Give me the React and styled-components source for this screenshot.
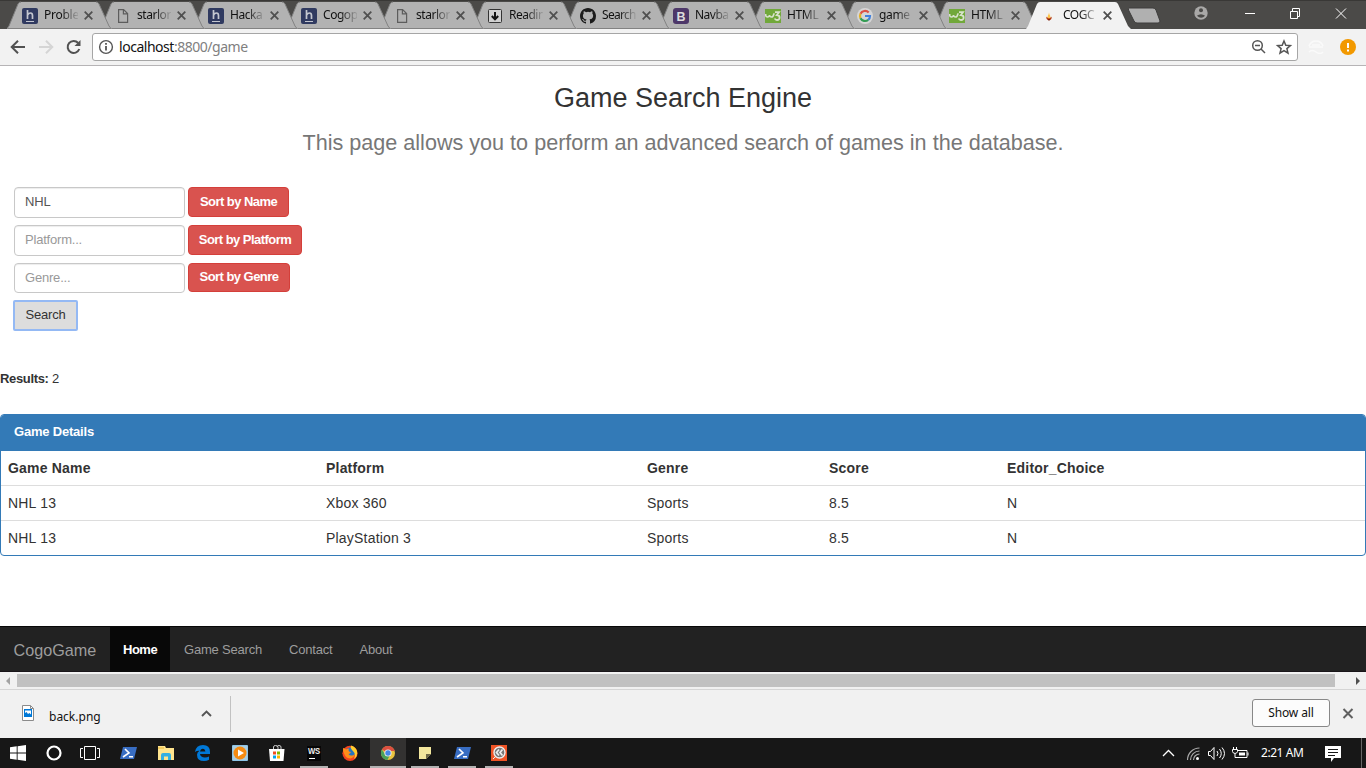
import React from "react";
import styled, { createGlobalStyle } from "styled-components";

const UI = '"Noto Sans", "Open Sans", sans-serif';

const Global = createGlobalStyle`
  * { box-sizing: border-box; }
  body { margin: 0; background: #fff; overflow: hidden; }
  svg { display: block; flex: none; }
`;

const Screen = styled.div`
  width: 1366px;
  height: 768px;
  display: flex;
  flex-direction: column;
  overflow: hidden;
  font-family: "Liberation Sans", Arial, sans-serif;
  font-size: 13px;
  letter-spacing: -0.2px;
  color: #333;
`;

/* Browser frame */
const TabStrip = styled.div`
  height: 29px;
  background: #4b4a48;
  border-top: 1px solid #393836;
  display: flex;
  padding-left: 7px;
  position: relative;
  flex: none;
`;
const TabBox = styled.div`
  width: 105px;
  height: 28px;
  flex: none;
  margin-right: ${(p) => p.$overlap}px;
  position: relative;
  z-index: ${(p) => p.$z};
  display: flex;
  align-items: center;
  padding-left: 15px;
`;
const TabShape = styled.svg`
  position: absolute;
  inset: 0;
`;
const Favicon = styled.div`
  width: 16px;
  height: 16px;
  position: relative;
  margin-top: 1px;
`;
const TabTitle = styled.div`
  position: relative;
  width: 34px;
  margin-left: 6px;
  overflow: hidden;
  white-space: nowrap;
  font: 12px/18px ${UI};
  letter-spacing: ${(p) => p.$track || -0.45}px;
  color: #111;
  mask-image: linear-gradient(90deg, #000 50%, rgba(0, 0, 0, 0.1) 100%);
`;
const TabClose = styled.svg`
  position: relative;
  margin-left: 6px;
  margin-top: 1px;
`;
const NewTab = styled.svg`
  margin: 6px 0 0 9px;
`;
const WindowButtons = styled.div`
  margin-left: auto;
  display: flex;
  align-items: center;
  height: 24px;
  padding-right: 19px;
`;
const Toolbar = styled.div`
  height: 37px;
  flex: none;
  background: #f2f2f2;
  border-bottom: 1px solid #b6b4b6;
  display: flex;
  align-items: center;
  padding: 0 9px 0 9px;
`;
const NavIcon = styled.svg`
  margin-right: 10px;
`;
const AddressBar = styled.div`
  width: 1206px;
  height: 28px;
  border: 1px solid #a6a6a6;
  border-radius: 3px;
  background: #fff;
  display: flex;
  align-items: center;
  padding: 0 3px 0 5px;
`;
const Url = styled.div`
  font: 14px/20px ${UI};
  letter-spacing: -0.47px;
  color: #808080;
  margin: 0 auto 0 5px;
  b { font-weight: 400; color: #111; }
`;
const ExtensionIcon = styled.svg`
  margin-left: 10px;
`;
const UpdateIcon = styled.svg`
  margin-left: 16px;
`;

/* Page */
const Page = styled.main`
  height: 560px;
  flex: none;
  background: #fff;
`;
const Heading = styled.h3`
  margin: 0;
  padding-top: 15px;
  text-align: center;
  font-size: 27px;
  line-height: 34px;
  font-weight: 400;
  letter-spacing: 0;
`;
const Lead = styled.p`
  margin: 0;
  padding-top: 13px;
  text-align: center;
  font-size: 21.6px;
  line-height: 30px;
  letter-spacing: 0;
  color: #777;
`;
const Form = styled.form`
  padding: 29px 0 0 14px;
  height: 144px;
  box-sizing: content-box;
`;
const FormRow = styled.div`
  display: flex;
  gap: 3px;
  height: 38px;
  align-items: flex-start;
`;
const Field = styled.input`
  width: 171px;
  height: ${(p) => p.$h || 31}px;
  border: 1px solid #c8c8c8;
  border-radius: 4px;
  box-shadow: inset 0 1px 1px rgba(0, 0, 0, 0.075);
  padding: 0 10px 2px;
  font: 13px "Liberation Sans", Arial, sans-serif;
  letter-spacing: -0.2px;
  color: #555;
  outline: none;
  &::placeholder { color: #999; opacity: 1; }
`;
const SortButton = styled.button`
  width: ${(p) => p.$w}px;
  height: ${(p) => p.$h || 30}px;
  border: 1px solid #d43f3a;
  border-radius: 4px;
  background: #d9534f;
  color: #fff;
  padding: 0 0 2px;
  font: bold 13px "Liberation Sans", Arial, sans-serif;
  letter-spacing: -0.55px;
`;
const SearchButton = styled.button`
  margin: -1px 0 0 -1px;
  width: 65px;
  height: 31px;
  border: 2px solid #94b9f4;
  border-radius: 2px;
  background: #ddd;
  color: #333;
  padding: 0 0 2px;
  font: 13px "Liberation Sans", Arial, sans-serif;
  letter-spacing: -0.2px;
`;
const Results = styled.p`
  margin: 0;
  padding-top: 39px;
  line-height: 18px;
  b { letter-spacing: -0.35px; }
`;
const Panel = styled.section`
  margin-top: 26px;
  height: 142px;
  border: 1px solid #337ab7;
  border-radius: 4px;
  overflow: hidden;
`;
const PanelHeading = styled.div`
  height: 36px;
  background: #337ab7;
  color: #fff;
  font-weight: 700;
  line-height: 34px;
  padding-left: 13px;
`;
const TableRow = styled.div`
  display: grid;
  grid-template-columns: 318px 321px 182px 178px 1fr;
  height: 35px;
  padding-left: 7px;
  line-height: 34px;
  font-size: 14px;
  letter-spacing: 0.2px;
  font-weight: ${(p) => (p.$head ? 700 : 400)};
  border-bottom: 1px solid #ddd;
  &:last-child { border-bottom: 0; }
`;
const Navbar = styled.nav`
  height: 46px;
  flex: none;
  background: #222;
  border-top: 1px solid #080808;
  border-bottom: 1px solid #191519;
  display: flex;
  color: #9d9d9d;
  line-height: 45px;
`;
const Brand = styled.div`
  width: 110px;
  padding: 1px 0 0 13.5px;
  font-size: 16.2px;
  letter-spacing: 0;
`;
const NavItem = styled.div`
  padding: 0 13px 0 14px;
  height: 45px;
  ${(p) => p.$active && "background:#080808;color:#fff;font-weight:700;width:60px;padding:0 0 0 13px;letter-spacing:-0.5px;"}
`;
const ScrollBar = styled.div`
  height: 17px;
  flex: none;
  background: #f1f1f1;
  display: flex;
  align-items: center;
`;
const ScrollThumb = styled.div`
  width: 1318px;
  height: 13px;
  background: #c1c1c1;
`;
const ScrollArrow = styled.svg`
  margin: 0 ${(p) => p.$r}px 0 ${(p) => p.$l}px;
`;

/* Downloads */
const Downloads = styled.div`
  height: 49px;
  flex: none;
  background: #f1f1f1;
  border-top: 1px solid #d5d5d5;
  display: flex;
  align-items: center;
  padding: 0 12px 0 22px;
  font: 12px ${UI};
  color: #111;
`;
const DownloadItem = styled.div`
  width: 209px;
  height: 36px;
  border-right: 1px solid #c2c2c2;
  display: flex;
  align-items: center;
  padding-right: 18px;
  margin-top: -1px;
`;
const FileIcon = styled.svg`
  margin-top: -2px;
`;
const FileName = styled.span`
  margin: 5px auto 0 15px;
  letter-spacing: 0;
`;
const ShowAll = styled.button`
  margin: -2px 12px 0 auto;
  width: 78px;
  height: 28px;
  border: 1px solid #888;
  border-radius: 3px;
  background: #fcfcfc;
  color: #111;
  padding: 0 0 1px;
  font: 12px ${UI};
  letter-spacing: -0.1px;
`;

/* Taskbar */
const Taskbar = styled.div`
  height: 30px;
  flex: none;
  background: #171717;
  display: flex;
  color: #fff;
`;
const Task = styled.div`
  width: ${(p) => p.$w || 37}px;
  height: 30px;
  display: flex;
  align-items: center;
  justify-content: center;
  background: ${(p) => (p.$active ? "#333231" : "none")};
  box-shadow: ${(p) => (p.$open ? "inset 0 -2px #b2b2b2" : "none")};
  margin-left: ${(p) => p.$ml || 0}px;
`;
const Tray = styled.div`
  margin-left: auto;
  display: flex;
  align-items: center;
  font: 12px ${UI};
  letter-spacing: -0.45px;
`;
const Clock = styled.span`
  width: 46px;
  margin: 0 18px 1px 12px;
  white-space: nowrap;
`;
const DesktopEdge = styled.div`
  width: 1px;
  height: 30px;
  background: #666;
  margin: 0 4px 0 20px;
`;

const icons = {
  h: (
    <svg width="16" height="16">
      <rect width="16" height="16" rx="2" fill="#303a60" />
      <path d="M5.5 2v9M5.5 7q1-2 3-2 2 0 2 2.5V11" fill="none" stroke="#c3c6cf" strokeWidth="1.7" />
      <path d="M4 13.5h8" stroke="#c3c6cf" />
    </svg>
  ),
  doc: (
    <svg width="16" height="16" fill="none" stroke="#5d5d5d" strokeWidth="1.2">
      <path d="M3.6 1.6h5l4 4v8.8h-9zM8.4 1.8v4h4" />
    </svg>
  ),
  read: (
    <svg width="16" height="16">
      <rect x="1.5" y="1.5" width="13" height="13" rx="1" fill="#d0d0d0" stroke="#333" />
      <path d="M8 4v7M4.8 8 8 11.3 11.2 8" fill="none" stroke="#111" strokeWidth="2" />
    </svg>
  ),
  github: (
    <svg width="16" height="16" viewBox="0 0 16 16">
      <path
        fill="#1c1c1c"
        d="M8 0C3.58 0 0 3.58 0 8c0 3.54 2.29 6.53 5.47 7.59.4.07.55-.17.55-.38 0-.19-.01-.82-.01-1.49-2.01.37-2.53-.49-2.69-.94-.09-.23-.48-.94-.82-1.13-.28-.15-.68-.52-.01-.53.63-.01 1.08.58 1.23.82.72 1.21 1.87.87 2.33.66.07-.52.28-.87.51-1.07-1.78-.2-3.64-.89-3.64-3.95 0-.87.31-1.59.82-2.15-.08-.2-.36-1.02.08-2.12 0 0 .67-.21 2.2.82a7.4 7.4 0 0 1 4 0c1.53-1.04 2.2-.82 2.2-.82.44 1.1.16 1.92.08 2.12.51.56.82 1.27.82 2.15 0 3.07-1.87 3.75-3.65 3.95.29.25.54.73.54 1.48 0 1.07-.01 1.93-.01 2.2 0 .21.15.46.55.38A8.01 8.01 0 0 0 16 8c0-4.42-3.58-8-8-8z"
      />
    </svg>
  ),
  boot: (
    <svg width="16" height="16">
      <rect width="16" height="16" rx="3" fill="#4d3769" />
      <text x="8" y="12.5" textAnchor="middle" fontFamily="Liberation Sans" fontWeight="700" fontSize="12.5" fill="#ddd">B</text>
    </svg>
  ),
  w3: (
    <svg width="16" height="16">
      <rect y="1" width="16" height="14" fill="#71a83a" />
      <path d="M.7 6v1q0 2 1.8 2t2-2q.2 2 2 2 1.7 0 2.2-2.5l.6-1.2" fill="none" stroke="#d8e2cc" strokeWidth="1.6" />
      <path d="M10 4.2h4l-2.2 3q2.8 0 2.8 2.4t-2.6 2.4q-1.7 0-2.3-1.5" fill="none" stroke="#d8e2cc" strokeWidth="1.8" />
    </svg>
  ),
  google: (
    <svg width="16" height="16">
      <circle cx="8" cy="8" r="8" fill="#d6d6d6" />
      <g fill="none" strokeWidth="2.2">
        <path d="M11.7 4.5A5 5 0 0 0 3.5 5.8" stroke="#dd5144" />
        <path d="M3.5 5.8a5 5 0 0 0 0 4.4" stroke="#e4b126" />
        <path d="M3.5 10.2A5 5 0 0 0 11.2 11.8" stroke="#349c53" />
        <path d="M11.2 11.8Q13 10.4 13 8H8" stroke="#4280dc" />
      </g>
    </svg>
  ),
  flame: (
    <svg width="16" height="16">
      <path d="M5.2 8.5q.3 1 1.6 1h2.4q1.3 0 1.6-1 0 3.8-2.8 3.8T5.2 8.5" fill="#b63d16" />
      <path d="M8 4.5q.2 2 1.2 3.2.6 2.6-1.2 2.6T6.8 7.7Q7.8 6.5 8 4.5" fill="#ffc64a" />
      <path d="M7 11.8h2" stroke="#6c160b" />
    </svg>
  ),
};

const tabs = [
  ["h", "Proble", -0.25], ["doc", "starlor"], ["h", "Hacka"], ["h", "Cogop"],
  ["doc", "starlor"], ["read", "Readin", -0.5], ["github", "Search", -0.7], ["boot", "Navba", -0.5],
  ["w3", "HTML", -0.35], ["google", "game", -0.35], ["w3", "HTML", -0.35], ["flame", "COGC", -0.5],
];

const Tab = ({ icon, title, track, index, active }) => (
  <TabBox $z={active ? 30 : 20 - index} $overlap={index < 7 ? -12 : -13}>
    <TabShape width="105" height="28">
      <path
        d="M0 28 2 25 11 3Q12 1 14 1H89Q91 1 92 3L102 25 105 28Z"
        fill={active ? "#f2f2f2" : "#b2b2b2"}
      />
      {!active && <path d="M0 27.5 2 25 11 3Q12 1 14 1M89 1Q91 1 92 3L102 25 104 27.5M1 27.5H104" fill="none" stroke="#828282" />}
    </TabShape>
    <Favicon>{icons[icon]}</Favicon>
    <TabTitle $track={track}>{title}</TabTitle>
    <TabClose width="9" height="9" stroke="#505050" strokeWidth="1.8">
      <path d="m.7.7 7.6 7.6m0-7.6L.7 8.3" />
    </TabClose>
  </TabBox>
);

const PowerShell = () => (
  <svg width="17" height="14">
    <path d="M3 1h14l-3 12H0z" fill="#386dc2" />
    <path d="m5 3 4 4-6 4M9 10.7h4" fill="none" stroke="#fff" strokeWidth="1.6" />
  </svg>
);

export default function App() {
  return (
    <Screen>
      <Global />
      <TabStrip>
        {tabs.map(([icon, title, track], i) => (
          <Tab key={i} icon={icon} title={title} track={track} index={i} active={i === 11} />
        ))}
        <NewTab width="34" height="17">
          <path d="M2 1h24q2 0 3 2l4 11q0 2-2 2H10q-2 0-3-2L1.5 3Q1 1 2 1Z" fill="#b0b0b0" stroke="#3e3d3c" />
        </NewTab>
        <WindowButtons>
          <svg width="153" height="16" fill="none" stroke="#fff">
            <circle cx="7" cy="8" r="6.7" fill="#a9a8a7" stroke="none" />
            <circle cx="7" cy="5.3" r="2" fill="#4b4a48" stroke="none" />
            <path d="M2.9 10.8q4-3.3 8.2 0-4 4-8.2 0" fill="#4b4a48" stroke="none" />
            <path d="M51 8.5h10M96.5 6.5h7v7h-7zM98.5 6.5v-3h7v8h-2M142 3.5l10 10m0-10-10 10" />
          </svg>
        </WindowButtons>
      </TabStrip>

      <Toolbar>
        <NavIcon width="18" height="16" fill="none" stroke="#515151" strokeWidth="2"><path d="M16 8H3M9 1.7 2.7 8 9 14.3" /></NavIcon>
        <NavIcon width="18" height="16" fill="none" stroke="#d5d5d5" strokeWidth="2"><path d="M2 8h13M9 1.7 15.3 8 9 14.3" /></NavIcon>
        <NavIcon width="17" height="16" fill="none" stroke="#515151" strokeWidth="2">
          <path d="M13.2 4A6 6 0 1 0 14.3 10" /><path d="M15.5 1v6h-6z" fill="#515151" stroke="none" />
        </NavIcon>
        <AddressBar>
          <svg width="16" height="16" fill="none" stroke="#555" strokeWidth="1.4">
            <circle cx="8" cy="8" r="6.4" /><path d="M8 7v4.5M8 4v1.7" strokeWidth="1.8" />
          </svg>
          <Url><b>localhost</b>:8800/game</Url>
          <svg width="44" height="16" fill="none" stroke="#555" strokeWidth="1.5">
            <circle cx="7.5" cy="6.5" r="4.8" /><path d="m11 10 4 4M5 6.5h5" />
            <path d="m34 2 1.8 4.2 4.6.4-3.5 3 1.1 4.5-4-2.4-4 2.4 1.1-4.5-3.5-3 4.6-.4z" />
          </svg>
        </AddressBar>
        <ExtensionIcon width="16" height="14" fill="none" stroke="#fafafa">
          <path d="M1 6q2-5 7-5t7 5M1 7h14M4 5h8M1 12q3-3 7 0t7 0" strokeWidth="1.5" />
        </ExtensionIcon>
        <UpdateIcon width="16" height="16">
          <circle cx="8" cy="8" r="8" fill="#f29900" /><path d="M8 4v5M8 10.5v2" stroke="#fff" strokeWidth="2" />
        </UpdateIcon>
      </Toolbar>

      <Page>
        <Heading>Game Search Engine</Heading>
        <Lead>This page allows you to perform an advanced search of games in the database.</Lead>
        <Form onSubmit={(e) => e.preventDefault()}>
          <FormRow><Field defaultValue="NHL" /><SortButton type="button" $w={101}>Sort by Name</SortButton></FormRow>
          <FormRow><Field placeholder="Platform..." /><SortButton type="button" $w={114}>Sort by Platform</SortButton></FormRow>
          <FormRow><Field $h={30} placeholder="Genre..." /><SortButton type="button" $w={102} $h={29}>Sort by Genre</SortButton></FormRow>
          <SearchButton>Search</SearchButton>
        </Form>
        <Results><b>Results:</b> 2</Results>
        <Panel>
          <PanelHeading>Game Details</PanelHeading>
          <TableRow $head><span>Game Name</span><span>Platform</span><span>Genre</span><span>Score</span><span>Editor_Choice</span></TableRow>
          <TableRow><span>NHL 13</span><span>Xbox 360</span><span>Sports</span><span>8.5</span><span>N</span></TableRow>
          <TableRow><span>NHL 13</span><span>PlayStation 3</span><span>Sports</span><span>8.5</span><span>N</span></TableRow>
        </Panel>
      </Page>

      <Navbar>
        <Brand>CogoGame</Brand>
        <NavItem $active>Home</NavItem>
        <NavItem>Game Search</NavItem>
        <NavItem>Contact</NavItem>
        <NavItem>About</NavItem>
      </Navbar>
      <ScrollBar>
        <ScrollArrow $l={6} $r={7} width="4" height="8"><path d="M4 0v8L0 4z" fill="#a3a3a3" /></ScrollArrow>
        <ScrollThumb />
        <ScrollArrow $l={21} $r={6} width="4" height="8"><path d="M0 0v8l4-4z" fill="#505050" /></ScrollArrow>
      </ScrollBar>

      <Downloads>
        <DownloadItem>
          <FileIcon width="12" height="16">
            <path d="M.5.5h8l3 3v12H.5z" fill="#fff" stroke="#8b8b8b" /><path d="M8.5.5v3h3" fill="none" stroke="#8b8b8b" />
            <path d="M2 4h8v8H2z" fill="#0078d7" /><path d="M3 5.5h6v4L7.5 8 6 9 4.5 7 3 8z" fill="#fff" />
          </FileIcon>
          <FileName>back.png</FileName>
          <svg width="11" height="7"><path d="m1 6 4.5-4.5L10 6" fill="none" stroke="#555" strokeWidth="1.9" /></svg>
        </DownloadItem>
        <ShowAll>Show all</ShowAll>
        <svg width="12" height="12" stroke="#606060" strokeWidth="2"><path d="m1.5 1 9 9m0-9-9 9" /></svg>
      </Downloads>

      <Taskbar>
        <Task $w={36}>
          <svg width="16" height="16" fill="#fff"><path d="M0 2.3 6.7 1.3v6.2H0zM7.6 1.2 16 0v7.5H7.6zM0 8.5h6.7v6.2L0 13.7zM7.6 8.5H16V16L7.6 14.8z" /></svg>
        </Task>
        <Task $w={36}><svg width="16" height="16"><circle cx="8" cy="8" r="6.5" fill="none" stroke="#fff" strokeWidth="2.2" /></svg></Task>
        <Task $w={36}>
          <svg width="20" height="14" fill="none" stroke="#fff"><path d="M4.5.5h11v13h-11zM3 2.5H.5v9H3M17 2.5h2.5v9H17" /></svg>
        </Task>
        <Task $w={41}><PowerShell /></Task>
        <Task $w={34}>
          <svg width="16" height="14"><path d="M0 0h7l1 2h8v12H0z" fill="#ffe48e" /><path d="M0 2h6" stroke="#e8b333" /><path d="M3 14V9q0-2 2-2h6q2 0 2 2v5h-3v-3.5H6V14z" fill="#34afe2" /></svg>
        </Task>
        <Task $w={40}>
          <svg width="16" height="16"><path d="M0 7Q1 0 8 0q7 0 7 7v2H5q.4 3.4 5 3.4 2.3 0 4-1v3.3Q12 16 9 16 2 16 2 9.7q0-2.4 2.5-4Q2 5.4 0 7m5-.4h5.4Q10 3.7 7.8 3.7 5.5 3.7 5 6.6" fill="#0078d7" /></svg>
        </Task>
        <Task $w={34}>
          <svg width="16" height="16"><rect width="16" height="16" rx="1" fill="#8dc5e8" /><rect x="1" y="1" width="14" height="14" fill="#accdde" /><circle cx="8" cy="8" r="6.5" fill="#f58b12" /><path d="m6 4.5 6 3.5-6 3.5z" fill="#fff" /></svg>
        </Task>
        <Task $w={40}>
          <svg width="16" height="16"><path d="M4.5 4V2q0-1.5 2-1.5T9 2v2M8 2q0-1.5 2-1.5T12 2v2" fill="none" stroke="#ccc" /><path d="M0 4h15.5l-1 12H1z" fill="#fff" /><path d="M4 6.5h3v3H4z" fill="#f25022" /><path d="M8 6.5h3v3H8z" fill="#7fba00" /><path d="M4 10.5h3v3H4z" fill="#00a4ef" /><path d="M8 10.5h3v3H8z" fill="#ffb900" /></svg>
        </Task>
        <Task $w={28} $ml={3} $open>
          <svg width="14" height="15"><rect width="14" height="15" fill="#060606" /><text x="7" y="8" fontSize="8.5" fontFamily="Liberation Sans" fontWeight="700" textAnchor="middle" textLength="12" lengthAdjust="spacingAndGlyphs" fill="#eee">WS</text><path d="M2 12.5h6" stroke="#fff" /></svg>
        </Task>
        <Task $w={42} $ml={1}>
          <svg width="16" height="16">
            <circle cx="8" cy="8.3" r="7.6" fill="#f4421f" /><circle cx="8.5" cy="7.2" r="4.8" fill="#2674c0" />
            <path d="M9 .5q4.500 1 6 5.500 1 5-3 8 1.500-3 .5-6Q11 6 10 5 8 3 9 .5" fill="#ffcd2e" />
            <path d="M1 3q2 0 3 1.500 2-1 3-1Q6 5 7 6.500L9 7q-1 1.800-2.500 2 1 1.800 3.500 1.500 1.800 0 2.500-1.500 0 3.500-4 4.500-4.500 0-6-4Q.5 6 1 3" fill="#ff8d19" />
          </svg>
        </Task>
        <Task $w={36} $ml={-1} $active $open>
          <svg width="14" height="14" viewBox="0 0 14 14">
            <circle cx="7" cy="7" r="7" fill="#e9c33f" /><path d="M7 7 .9 3.5a7 7 0 0 1 12.2 0L14 5H7z" fill="#dc4f40" /><path d="M.9 3.5a7 7 0 0 0 5.6 10.5L9.4 8 7 7 4 8z" fill="#4aa15a" />
            <circle cx="7" cy="7" r="3.6" fill="#eee" /><circle cx="7" cy="7" r="2.7" fill="#4688e5" />
          </svg>
        </Task>
        <Task $w={28} $ml={5} $open><svg width="12" height="12"><path d="M0 0h12v7l-5 5H0z" fill="#f3e79d" /><path d="M7 12V7h5z" fill="#6e6847" /></svg></Task>
        <Task $w={28} $ml={9} $open><PowerShell /></Task>
        <Task $w={28} $ml={9} $open>
          <svg width="16" height="16"><rect width="16" height="16" fill="#ef5426" /><circle cx="8.5" cy="7.5" r="5.5" fill="#777" stroke="#eee" strokeWidth="1.4" /><path d="M11.500 4.500 9 7.500l2.500 3M8 4.500 5.500 7.500 8 10.500" fill="none" stroke="#eee" strokeWidth="1.7" /><path d="m2 14 3-3" stroke="#eee" /></svg>
        </Task>
        <Tray>
          <svg width="87" height="18" fill="none" stroke="#fff">
            <path d="m1 12 5.500-5.500L12 12" strokeWidth="1.3" />
            <path d="M25.500 16A12 12 0 0 1 37.500 4M28.500 16a9 9 0 0 1 9-9M31.500 16a6 6 0 0 1 6-6" stroke="#aaa" strokeWidth="1.2" /><circle cx="35.500" cy="14.500" r="1.500" fill="#fff" stroke="none" />
            <path d="M46.500 7.500h2l3.500-4v12l-3.500-4h-2zM55 7q2 2.500 0 5M57.500 5q3.500 4.500 0 9M60 3.500q5 6 0 12" />
            <path d="M75 6.500h10v7H74.500M86 8.500v3M71.500 3v2M74.500 3v2M70.500 5.500h5v2q-.5 2-2.500 2t-2.500-2zM73 10v3.500h2" />
            <path d="M77 8.500h6v3h-6z" fill="#fff" stroke="none" />
          </svg>
          <Clock>2:21 AM</Clock>
          <svg width="16" height="17"><path d="M0 1h16v12H9l-3 4v-4H0z" fill="#fff" /><path d="M3 4.500h10M3 7.500h10M3 10.500h7" stroke="#171717" /></svg>
          <DesktopEdge />
        </Tray>
      </Taskbar>
    </Screen>
  );
}
